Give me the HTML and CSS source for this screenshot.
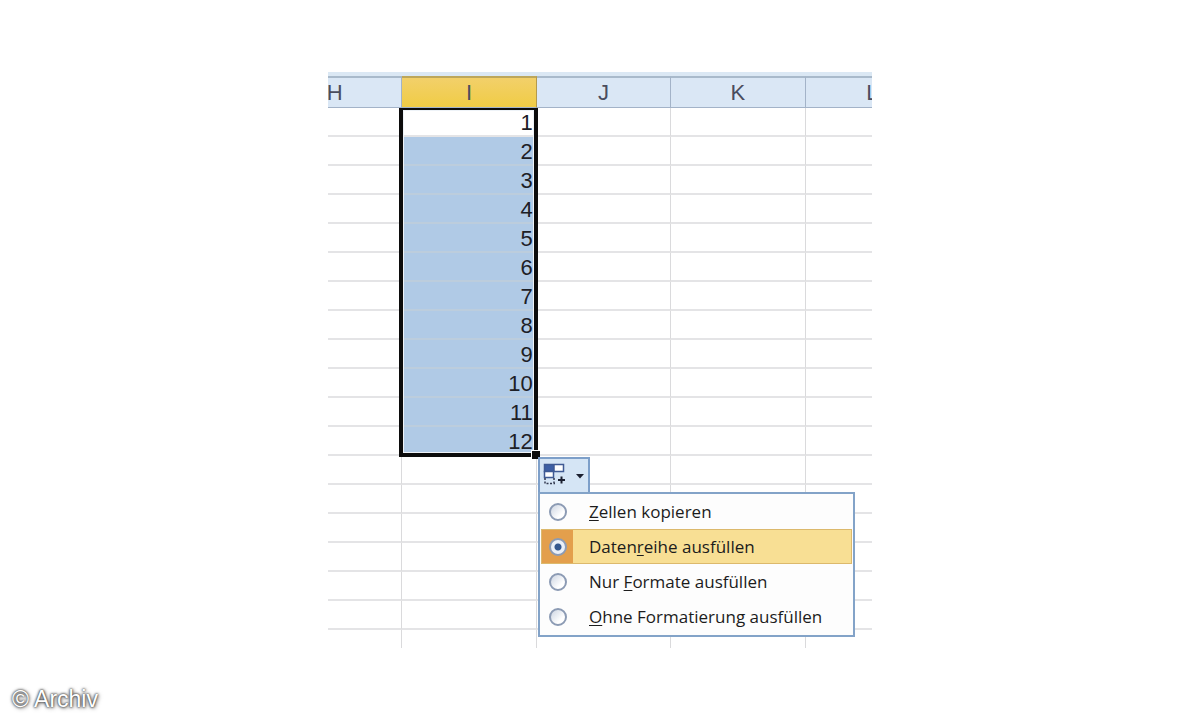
FILE: index.html
```html
<!DOCTYPE html>
<html lang="de">
<head>
  <meta charset="UTF-8" />
  <meta name="viewport" content="width=device-width, initial-scale=1.0"/>
  <title>Datenreihe ausfüllen</title>
  <link rel="stylesheet" href="styles.css">
</head>
<body>
  <main class="sheet">
    <table class="grid">
      <thead>
        <tr><th>H</th><th class="active">I</th><th>J</th><th>K</th><th>L</th></tr>
      </thead>
      <tbody>
        <tr><td></td><td>1</td><td></td><td></td><td></td></tr>
        <tr><td></td><td class="filled">2</td><td></td><td></td><td></td></tr>
        <tr><td></td><td class="filled">3</td><td></td><td></td><td></td></tr>
        <tr><td></td><td class="filled">4</td><td></td><td></td><td></td></tr>
        <tr><td></td><td class="filled">5</td><td></td><td></td><td></td></tr>
        <tr><td></td><td class="filled">6</td><td></td><td></td><td></td></tr>
        <tr><td></td><td class="filled">7</td><td></td><td></td><td></td></tr>
        <tr><td></td><td class="filled">8</td><td></td><td></td><td></td></tr>
        <tr><td></td><td class="filled">9</td><td></td><td></td><td></td></tr>
        <tr><td></td><td class="filled">10</td><td></td><td></td><td></td></tr>
        <tr><td></td><td class="filled">11</td><td></td><td></td><td></td></tr>
        <tr><td></td><td class="filled">12</td><td></td><td></td><td></td></tr>
        <tr><td></td><td></td><td></td><td></td><td></td></tr>
        <tr><td></td><td></td><td></td><td></td><td></td></tr>
        <tr><td></td><td></td><td></td><td></td><td></td></tr>
        <tr><td></td><td></td><td></td><td></td><td></td></tr>
        <tr><td></td><td></td><td></td><td></td><td></td></tr>
        <tr><td></td><td></td><td></td><td></td><td></td></tr>
        <tr><td></td><td></td><td></td><td></td><td></td></tr>
      </tbody>
    </table>

    <div class="selection"><span class="handle"></span></div>

    <div class="autofill">
      <button type="button" class="autofill-button" aria-label="Auto-Ausfülloptionen">
        <svg width="48" height="32" viewBox="0 0 48 32" aria-hidden="true">
          <rect x="4" y="4" width="10" height="8" fill="#3d5fa5"/>
          <rect x="14" y="5" width="9" height="6" fill="#fff"/>
          <path d="M4.500 4.500H23.500V11.500H4.500ZM14 4.500V11.500" fill="none" stroke="#3f5a94" stroke-width="1.500"/>
          <rect x="4.500" y="11.500" width="9" height="6" fill="#fff" stroke="#3f5a94" stroke-width="1.500"/>
          <path d="M5 18V23.500H15M14 18V23" fill="none" stroke="#333a50" stroke-width="1.500" stroke-dasharray="2 1.500"/>
          <path d="M18 20H25M21.500 16.500V23.500" stroke="#1c2030" stroke-width="2"/>
          <path d="M36 14H44L40 18.500Z" fill="#1c2030"/>
        </svg>
      </button>
      <form class="menu">
        <label><input type="radio" name="fill"><span><u>Z</u>ellen kopieren</span></label>
        <label class="chosen"><input type="radio" name="fill" checked><span>Daten<u>r</u>eihe ausfüllen</span></label>
        <label><input type="radio" name="fill"><span>Nur <u>F</u>ormate ausfüllen</span></label>
        <label><input type="radio" name="fill"><span><u>O</u>hne Formatierung ausfüllen</span></label>
      </form>
    </div>
  </main>

  <footer class="credit">© Archiv</footer>
</body>
</html>
```
FILE: styles.css
```css
* {
  box-sizing: border-box;
}

body {
  margin: 0;
  min-height: 100vh;
  display: flex;
  flex-direction: column;
  align-items: center;
  padding-top: 72px;
  background: #fff;
  font-family: "Liberation Sans", Arial, sans-serif;
  font-size: 22px;
}

.sheet {
  position: relative;
  width: 100%;
  max-width: 544px;
  max-height: 576px;
  overflow: hidden;
  border-top: 4px solid #dbe8f4;
}

.grid {
  width: 672px;
  margin-left: -60px;
  table-layout: fixed;
  border-collapse: separate;
  border-spacing: 0;
  line-height: 28px;
}

.grid th {
  height: 32px;
  padding: 0;
  border: 1px solid #a3b3c8;
  border-top: 2px solid #a9bacb;
  border-left: none;
  background: #dae7f5;
  color: #4a4d5e;
  font-weight: normal;
}

.grid th.active {
  background: linear-gradient(#f2d06a, #f0cc45);
  border-top-color: #bda75b;
  border-right-color: #b49a4c;
}

.grid td {
  height: 29px;
  padding: 2px 3px 0 0;
  border-right: 1px solid #dadadc;
  border-bottom: 2px solid #e4e4e6;
  color: #1d2026;
  text-align: right;
  line-height: 25px;
}

.grid td.filled {
  background: #b0cae6;
  border-bottom-color: #bccddd;
}

/* frame around I1:I12 */
.selection {
  position: absolute;
  top: 32px;
  left: 71px;
  width: 139px;
  height: 349px;
  border: 4px solid #0c0c0c;
  border-top-width: 2px;
  box-shadow: inset 0 0 0 1px #eef3f8;
}

.handle {
  position: absolute;
  right: -6px;
  bottom: -6px;
  width: 9px;
  height: 9px;
  border: 1px solid #fff;
  border-width: 1px 0 0 1px;
  background: #0c0c0c;
}

.autofill {
  position: absolute;
  top: 381px;
  left: 210px;
  width: 317px;
}

.autofill-button {
  display: block;
  width: 52px;
  height: 35px;
  padding: 0;
  border: 2px solid #7d9fc9;
  border-bottom: none;
  background: #d5e5f5;
}

.autofill-button svg {
  display: block;
}

.menu {
  padding: 0 1px 1px;
  border: 2px solid #83a3c8;
  background: #fdfdfd;
  font-family: "Open Sans", "Noto Sans", sans-serif;
  font-size: 17px;
  color: #1c1c1c;
}

.menu label {
  display: flex;
  align-items: center;
  height: 35px;
  border: 1px solid transparent;
}

.menu label.chosen {
  border-color: #dcb96c;
  background: linear-gradient(to right, #e39f4c 31px, #f8df94 31px);
}

.menu input {
  appearance: none;
  flex: none;
  width: 18px;
  height: 18px;
  margin: 0 22px 0 7px;
  border: 2px solid #8c9bb4;
  border-radius: 50%;
  background: linear-gradient(135deg, #cdd5e2, #fff 70%);
}

.menu input:checked {
  background: radial-gradient(circle, #34588e 3px, #eaf0f8 4px);
}

.menu u {
  text-underline-offset: 2px;
}

.credit {
  align-self: flex-start;
  margin-top: auto;
  padding: 0 0 8px 12px;
  color: #fff;
  font-size: 23px;
  line-height: 26px;
  text-shadow: 0 0 2px #333, 0 0 3px #555, 1px 1px 4px #777;
}
```
